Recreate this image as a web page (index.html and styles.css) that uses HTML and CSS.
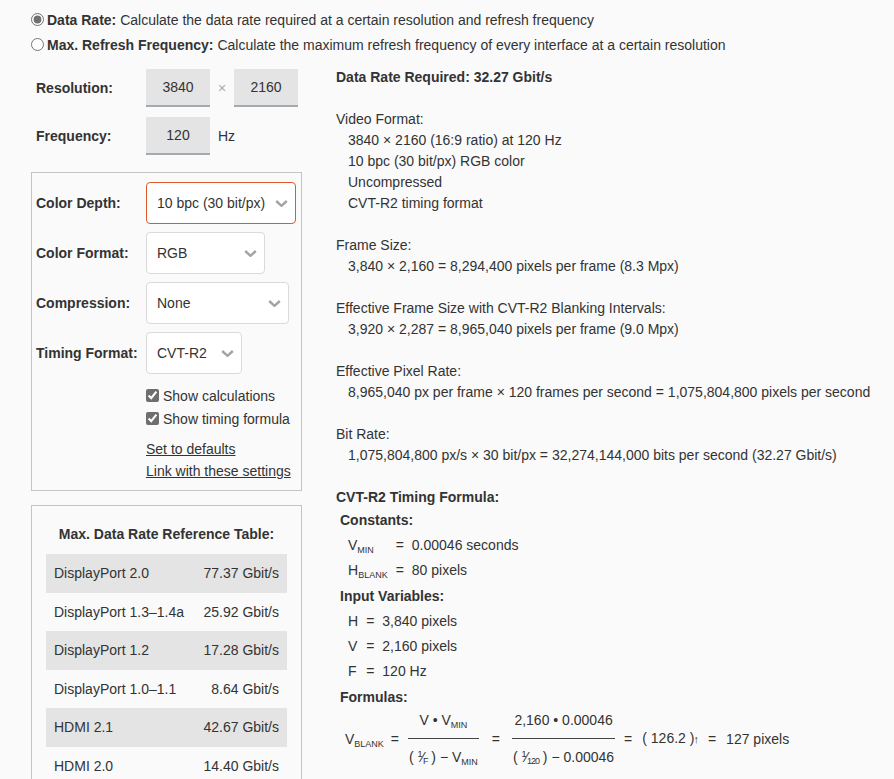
FILE: index.html
```html
<!DOCTYPE html>
<html lang="en">
<head>
    <meta charset="UTF-8">
    <title>Display Bandwidth Calculator</title>
    <link rel="stylesheet" href="styles.css">
</head>
<body>
    <div class="page">
        <!-- Calculator mode -->
        <div class="modes">
            <label class="mode"><input type="radio" name="mode" checked><span><b>Data Rate:</b> Calculate the data rate required at a certain resolution and refresh frequency</span></label>
            <label class="mode"><input type="radio" name="mode"><span><b>Max. Refresh Frequency:</b> Calculate the maximum refresh frequency of every interface at a certain resolution</span></label>
        </div>

        <div class="main">
            <div class="side">
                <div class="dims">
                    <div class="row">
                        <span class="label">Resolution:</span>
                        <input class="num" type="text" value="3840">
                        <span class="times">×</span>
                        <input class="num" type="text" value="2160">
                    </div>
                    <div class="row">
                        <span class="label">Frequency:</span>
                        <input class="num" type="text" value="120">
                        <span class="unit">Hz</span>
                    </div>
                </div>

                <!-- Settings -->
                <div class="panel settings">
                    <div class="row">
                        <span class="label">Color Depth:</span>
                        <div class="sel">
                            <select class="hl w-depth">
                                <option>8 bpc (24 bit/px)</option>
                                <option selected>10 bpc (30 bit/px)</option>
                                <option>12 bpc (36 bit/px)</option>
                            </select>
                            <svg width="13" height="7" viewBox="0 0 13 7"><path d="M1.2 1 L6.5 5.8 L11.8 1" fill="none" stroke="#a3a3a3" stroke-width="2.4"/></svg>
                        </div>
                    </div>
                    <div class="row">
                        <span class="label">Color Format:</span>
                        <div class="sel">
                            <select class="w-format">
                                <option selected>RGB</option>
                                <option>YCbCr 4:2:2</option>
                                <option>YCbCr 4:2:0</option>
                            </select>
                            <svg width="13" height="7" viewBox="0 0 13 7"><path d="M1.2 1 L6.5 5.8 L11.8 1" fill="none" stroke="#a3a3a3" stroke-width="2.4"/></svg>
                        </div>
                    </div>
                    <div class="row">
                        <span class="label">Compression:</span>
                        <div class="sel">
                            <select class="w-comp">
                                <option selected>None</option>
                                <option>DSC 2.0x</option>
                                <option>DSC 3.0x</option>
                            </select>
                            <svg width="13" height="7" viewBox="0 0 13 7"><path d="M1.2 1 L6.5 5.8 L11.8 1" fill="none" stroke="#a3a3a3" stroke-width="2.4"/></svg>
                        </div>
                    </div>
                    <div class="row">
                        <span class="label">Timing Format:</span>
                        <div class="sel">
                            <select class="w-timing">
                                <option>CVT</option>
                                <option>CVT-R</option>
                                <option selected>CVT-R2</option>
                            </select>
                            <svg width="13" height="7" viewBox="0 0 13 7"><path d="M1.2 1 L6.5 5.8 L11.8 1" fill="none" stroke="#a3a3a3" stroke-width="2.4"/></svg>
                        </div>
                    </div>

                    <div class="checks">
                        <label class="check"><input type="checkbox" checked><span>Show calculations</span></label>
                        <label class="check"><input type="checkbox" checked><span>Show timing formula</span></label>
                    </div>
                    <div class="links">
                        <a href="#">Set to defaults</a>
                        <a href="#">Link with these settings</a>
                    </div>
                </div>

                <!-- Reference table -->
                <div class="panel ref">
                    <h4>Max. Data Rate Reference Table:</h4>
                    <table>
                        <tr><td>DisplayPort 2.0</td><td>77.37 Gbit/s</td></tr>
                        <tr><td>DisplayPort 1.3–1.4a</td><td>25.92 Gbit/s</td></tr>
                        <tr><td>DisplayPort 1.2</td><td>17.28 Gbit/s</td></tr>
                        <tr><td>DisplayPort 1.0–1.1</td><td>8.64 Gbit/s</td></tr>
                        <tr><td>HDMI 2.1</td><td>42.67 Gbit/s</td></tr>
                        <tr><td>HDMI 2.0</td><td>14.40 Gbit/s</td></tr>
                    </table>
                </div>
            </div>

            <!-- Results -->
            <div class="results">
                <h3>Data Rate Required: 32.27 Gbit/s</h3>

                <div class="sec">
                    <div>Video Format:</div>
                    <div class="lines">
                        <div>3840 × 2160 (16:9 ratio) at 120 Hz</div>
                        <div>10 bpc (30 bit/px) RGB color</div>
                        <div>Uncompressed</div>
                        <div>CVT-R2 timing format</div>
                    </div>
                </div>
                <div class="sec">
                    <div>Frame Size:</div>
                    <div class="lines">3,840 × 2,160 = 8,294,400 pixels per frame (8.3 Mpx)</div>
                </div>
                <div class="sec">
                    <div>Effective Frame Size with CVT-R2 Blanking Intervals:</div>
                    <div class="lines">3,920 × 2,287 = 8,965,040 pixels per frame (9.0 Mpx)</div>
                </div>
                <div class="sec">
                    <div>Effective Pixel Rate:</div>
                    <div class="lines">8,965,040 px per frame × 120 frames per second = 1,075,804,800 pixels per second</div>
                </div>
                <div class="sec">
                    <div>Bit Rate:</div>
                    <div class="lines">1,075,804,800 px/s × 30 bit/px = 32,274,144,000 bits per second (32.27 Gbit/s)</div>
                </div>

                <div class="formula">
                    <h3>CVT-R2 Timing Formula:</h3>
                    <div class="group">Constants:</div>
                    <div class="vars">
                        <span>V<sub>MIN</sub></span><span>=</span><span>0.00046 seconds</span>
                        <span>H<sub>BLANK</sub></span><span>=</span><span>80 pixels</span>
                    </div>
                    <div class="group">Input Variables:</div>
                    <div class="vars">
                        <span>H</span><span>=</span><span>3,840 pixels</span>
                        <span>V</span><span>=</span><span>2,160 pixels</span>
                        <span>F</span><span>=</span><span>120 Hz</span>
                    </div>
                    <div class="group">Formulas:</div>
                    <div class="eq">
                        <span>V<sub>BLANK</sub></span>
                        <span class="op">=</span>
                        <span class="frac">
                            <span class="top">V • V<sub>MIN</sub></span>
                            <span class="bot">( <span class="vf"><sup>1</sup>⁄<sub>F</sub></span> ) − V<sub>MIN</sub></span>
                        </span>
                        <span class="op wide">=</span>
                        <span class="frac">
                            <span class="top">2,160 • 0.00046</span>
                            <span class="bot">( <span class="vf"><sup>1</sup>⁄<sub>120</sub></span> ) − 0.00046</span>
                        </span>
                        <span class="op after">=</span>
                        <span>( 126.2 )<span class="ceil">↑</span></span>
                        <span class="op after">=</span>
                        <span>127 pixels</span>
                    </div>
                </div>
            </div>
        </div>
    </div>
</body>
</html>
```

FILE: styles.css
```css
/* General styles */
* {
    box-sizing: border-box;
}

body {
    margin: 0;
    background: #fafafa;
    font-family: "Liberation Sans", Arial, sans-serif;
    font-size: 14px;
    color: #333;
}

.page {
    padding: 7px 0 0 31px;
}

/* Mode switch */
.mode {
    display: flex;
    align-items: center;
    height: 25px;
}

.mode input {
    width: 13px;
    height: 13px;
    margin: 0 3px 0 0;
    accent-color: #707070;
}

.main {
    display: flex;
    margin-top: 12px;
}

.side {
    width: 271px;
    flex: none;
}

.row {
    display: flex;
    align-items: center;
}

.label {
    width: 110px;
    flex: none;
    font-weight: bold;
}

/* Resolution / frequency */
.dims {
    padding-left: 5px;
}

.dims .row + .row {
    margin-top: 10px;
}

.num {
    width: 64px;
    height: 38px;
    padding: 0;
    border: 0;
    border-bottom: 2px solid #a4aab1;
    background: #e4e4e4;
    font: inherit;
    color: #333;
    text-align: center;
}

.times {
    width: 24px;
    text-align: center;
    color: #aaa;
}

.unit {
    margin-left: 8px;
}

/* Panels */
.panel {
    border: 1px solid #c4c4c4;
}

.settings {
    margin-top: 17px;
    padding: 9px 4px 8px;
}

.settings .row + .row {
    margin-top: 8px;
}

.sel {
    position: relative;
}

.sel select {
    appearance: none;
    height: 42px;
    padding: 0 28px 0 10px;
    border: 1px solid #dadada;
    border-radius: 4px;
    background: #fff;
    font: inherit;
    color: #333;
}

.sel select.hl {
    border-color: #e0592b;
}

.sel svg {
    position: absolute;
    right: 8px;
    top: 18px;
    pointer-events: none;
}

.w-depth { width: 150px; }
.w-format { width: 119px; }
.w-comp { width: 143px; }
.w-timing { width: 96px; }

.checks {
    margin: 10px 0 0 110px;
}

.check {
    display: flex;
    align-items: center;
    height: 23px;
}

.check input {
    width: 13px;
    height: 13px;
    margin: 0 4px 0 0;
    accent-color: #6e6e6e;
}

.links {
    margin: 8px 0 0 110px;
    line-height: 22px;
}

.links a {
    display: block;
    width: fit-content;
    color: #333;
}

/* Reference table */
.ref {
    margin-top: 14px;
    padding: 17px 14px 10px;
}

.ref h4 {
    margin: 0 0 9px;
    font-size: 14px;
    line-height: 22px;
    text-align: center;
}

.ref table {
    width: 100%;
    border-collapse: collapse;
}

.ref td {
    height: 38.5px;
    padding: 0 8px;
}

.ref td:last-child {
    text-align: right;
}

.ref tr:nth-child(odd) td {
    background: #e4e4e4;
}

/* Results */
.results {
    margin: -2px 0 0 34px;
    line-height: 21px;
}

.results h3 {
    margin: 0 0 21px;
    font-size: 14px;
    line-height: 21px;
}

.sec {
    margin-bottom: 21px;
}

.lines {
    padding-left: 12px;
}

.formula h3 {
    margin: 0;
}

.group {
    padding-left: 4px;
    font-weight: bold;
    line-height: 25px;
}

.vars {
    display: grid;
    grid-template-columns: auto auto 1fr;
    column-gap: 8px;
    padding-left: 12px;
    line-height: 25px;
}

.vars + .group {
    margin-top: 1px;
}

sub, sup {
    font-size: 9px;
    line-height: 0;
}

sub {
    vertical-align: -3px;
}

sup {
    vertical-align: 5px;
}

.eq {
    display: flex;
    align-items: center;
    padding: 0 0 0 9px;
}

.op {
    margin: 0 9px 0 7px;
}

.op.wide {
    margin: 0 12px 0 13px;
}

.op.after {
    margin: 0 10px 0 9px;
}

.frac {
    display: inline-flex;
    flex-direction: column;
    align-items: stretch;
    text-align: center;
}

.frac .top {
    padding: 0 1px 7px;
    border-bottom: 1px solid #444;
}

.frac .bot {
    padding: 8px 1px 0;
}

.vf {
    letter-spacing: -1px;
}

.vf sub {
    vertical-align: -2px;
}

.ceil {
    font-family: "Liberation Sans", Arial, sans-serif;
    font-size: 11px;
    margin-left: -1px;
}
```
